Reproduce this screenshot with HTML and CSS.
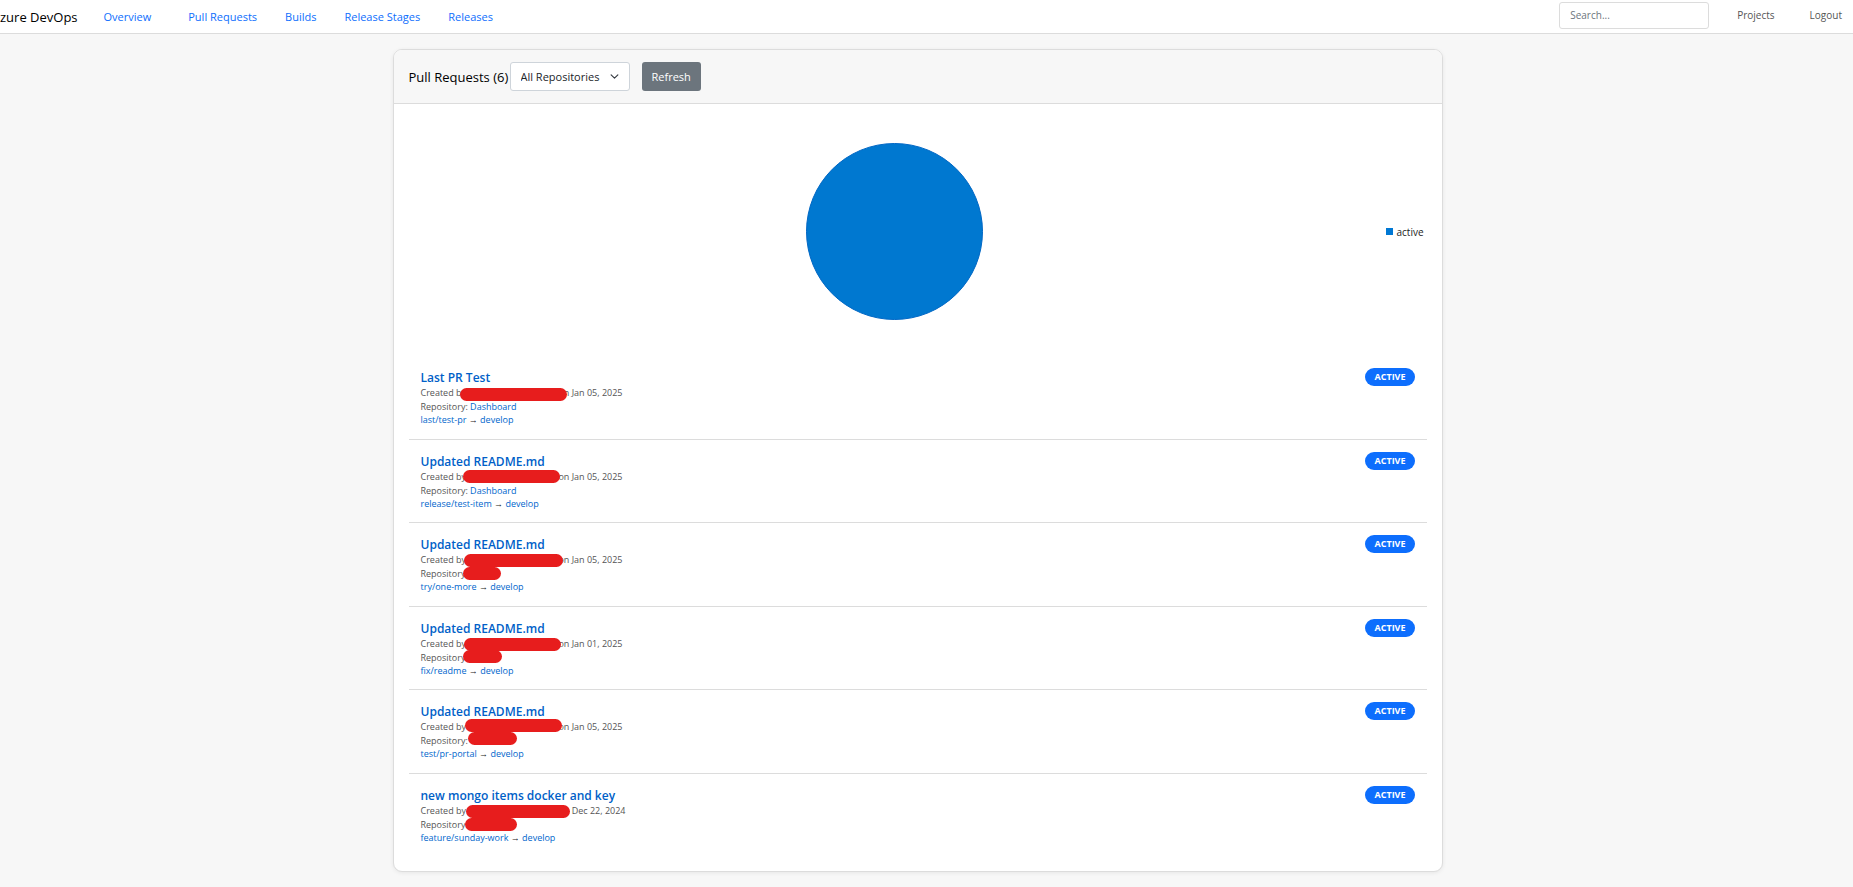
FILE: index.html
```
<!DOCTYPE html>
<html lang="en">
<head>
<meta charset="utf-8">
<title>Azure DevOps - Pull Requests</title>
<link rel="stylesheet" href="styles.css">
</head>
<body>
<header class="navbar">
  <div class="brand">zure DevOps</div>
  <nav class="nav-links">
    <a class="first" href="#overview">Overview</a>
    <a href="#pull-requests">Pull Requests</a>
    <a href="#builds">Builds</a>
    <a href="#stages">Release Stages</a>
    <a href="#releases">Releases</a>
  </nav>
  <div class="nav-right">
    <input class="search" type="search" placeholder="Search..." aria-label="Search">
    <a href="#projects">Projects</a>
    <a href="#logout">Logout</a>
  </div>
</header>
<main class="card">
  <div class="card-header">
    <h1>Pull Requests (6)</h1>
    <div class="select-wrap">
      <select aria-label="Repository"><option>All Repositories</option></select>
      <svg class="chevron" viewBox="0 0 16 16" aria-hidden="true"><path d="m2 5 6 6 6-6"/></svg>
    </div>
    <button class="refresh" type="button">Refresh</button>
  </div>
  <div class="card-body">
    <div class="chart">
      <div class="pie-area"><svg class="pie" viewBox="0 0 177 177" role="img" aria-label="active: 6"><circle cx="88.5" cy="88.5" r="88"/></svg></div>
      <div class="legend"><span class="swatch"></span>active</div>
    </div>
    <ul class="pr-list">
      <li class="pr">
        <div class="info">
          <a class="title" href="#pr6">Last PR Test</a>
          <p class="created"><span>Created by</span><span>on Jan 05, 2025</span></p>
          <p>Repository: <a href="#repo">Dashboard</a></p>
          <p class="branch"><a href="#b">last/test-pr</a> → <a href="#d">develop</a></p>
          <i class="mask author-a"></i>
        </div>
        <span class="badge">ACTIVE</span>
      </li>
      <li class="pr">
        <div class="info">
          <a class="title" href="#pr5">Updated README.md</a>
          <p class="created"><span>Created by</span><span>on Jan 05, 2025</span></p>
          <p>Repository: <a href="#repo">Dashboard</a></p>
          <p class="branch"><a href="#b">release/test-item</a> → <a href="#d">develop</a></p>
          <i class="mask author-b"></i>
        </div>
        <span class="badge">ACTIVE</span>
      </li>
      <li class="pr">
        <div class="info">
          <a class="title" href="#pr4">Updated README.md</a>
          <p class="created"><span>Created by</span><span>on Jan 05, 2025</span></p>
          <p>Repository:</p>
          <p class="branch"><a href="#b">try/one-more</a> → <a href="#d">develop</a></p>
          <i class="mask author-c"></i><i class="mask repo-c"></i>
        </div>
        <span class="badge">ACTIVE</span>
      </li>
      <li class="pr">
        <div class="info">
          <a class="title" href="#pr3">Updated README.md</a>
          <p class="created"><span>Created by</span><span>on Jan 01, 2025</span></p>
          <p>Repository:</p>
          <p class="branch"><a href="#b">fix/readme</a> → <a href="#d">develop</a></p>
          <i class="mask author-d"></i><i class="mask repo-d"></i>
        </div>
        <span class="badge">ACTIVE</span>
      </li>
      <li class="pr">
        <div class="info">
          <a class="title" href="#pr2">Updated README.md</a>
          <p class="created"><span>Created by</span><span>on Jan 05, 2025</span></p>
          <p>Repository:</p>
          <p class="branch"><a href="#b">test/pr-portal</a> → <a href="#d">develop</a></p>
          <i class="mask author-e"></i><i class="mask repo-e"></i>
        </div>
        <span class="badge">ACTIVE</span>
      </li>
      <li class="pr">
        <div class="info">
          <a class="title" href="#pr1">new mongo items docker and key</a>
          <p class="created wide"><span>Created by</span><span>on Dec 22, 2024</span></p>
          <p>Repository:</p>
          <p class="branch"><a href="#b">feature/sunday-work</a> → <a href="#d">develop</a></p>
          <i class="mask author-f"></i><i class="mask repo-f"></i>
        </div>
        <span class="badge">ACTIVE</span>
      </li>
    </ul>
  </div>
</main>
</body>
</html>
```
FILE: styles.css
```
* { box-sizing: border-box; }
body { margin: 0; background: #f7f7f7; color: #000; font-family: "Open Sans", "Noto Sans", sans-serif; font-size: 12px; line-height: 18px; }
a { color: #0066cc; text-decoration: none; }
p, h1, ul { margin: 0; padding: 0; }

.navbar { display: flex; align-items: center; height: 34px; background: #fff; border-bottom: 1px solid #dcdcdc; white-space: nowrap; }
.brand { font-size: 13px; font-weight: 500; min-width: 77px; }
.nav-links { display: flex; gap: 28px; margin-left: 26px; }
.nav-links a { color: #0d6efd; font-size: 11px; }
.nav-links .first { margin-right: 9px; }
.nav-right { display: flex; align-items: center; margin-left: auto; padding: 0 11px 3px 0; }
.nav-right a { color: #555; font-size: 10px; margin-left: 35px; }
.nav-right .search + a { margin-left: 28px; }
.search { width: 150px; height: 27px; padding: 0 10px; border: 1px solid #dcdcdc; border-radius: 3px; background: #fff; font: 10px "Open Sans", "Noto Sans", sans-serif; outline: none; appearance: none; }
.search::placeholder { color: #6c757d; opacity: 1; }

.card { width: calc(100% - 32px); max-width: 1050px; margin: 15px auto; position: relative; right: 9px; background: #fff; border: 1px solid #dcdcdc; border-radius: 9px; box-shadow: 0 1px 4px rgba(0, 0, 0, .07); }
.card-header { display: flex; align-items: center; padding: 12px 15px; background: #f7f7f7; border-bottom: 1px solid #dcdcdc; border-radius: 8px 8px 0 0; }
.card-header h1 { min-width: 101px; font-size: 13px; font-weight: 500; white-space: nowrap; }
.select-wrap { position: relative; }
select { display: block; appearance: none; width: 120px; height: 29px; padding: 0 24px 0 10px; border: 1px solid #ced4da; border-radius: 3px; background: #fff; color: #212529; font: 11px "Open Sans", "Noto Sans", sans-serif; }
.chevron { position: absolute; right: 11px; top: 10px; width: 9px; height: 9px; fill: none; stroke: #343a40; stroke-width: 2; stroke-linecap: round; stroke-linejoin: round; pointer-events: none; }
.refresh { height: 29px; margin-left: 12px; padding: 0 10px; border: 0; border-radius: 3px; background: #6c757d; color: #fff; font: 11px "Open Sans", "Noto Sans", sans-serif; }

.card-body { padding: 15px; }
.chart { display: flex; align-items: center; height: 225px; margin-bottom: 12px; }
.pie-area { flex: 1; display: flex; justify-content: center; }
.pie { width: 177px; height: 177px; fill: #0078d0; stroke: #0067c5; stroke-width: 1; }
.legend { display: flex; align-items: center; gap: 4px; width: 41px; margin-left: 5px; font-size: 10px; color: #222; }
.swatch { width: 7px; height: 7px; background: #0078d4; }

.pr-list { list-style: none; }
.pr { display: flex; justify-content: space-between; align-items: flex-start; padding: 12px 12px 13px; border-bottom: 1px solid #dcdcdc; }
.pr:nth-child(even) { padding-bottom: 12px; }
.pr:last-child { border-bottom: 0; }
.info { position: relative; font-size: 9px; line-height: 14px; color: #555; white-space: nowrap; }
.title { display: block; padding-top: 1px; color: #005fc8; font-size: 12px; font-weight: 600; line-height: 17px; }
.created { display: flex; justify-content: space-between; width: 202px; }
.created.wide { width: 205px; }
.branch { color: #222; line-height: 12px; }
.badge { padding: 0 9px; border-radius: 9px; background: #0d6efd; color: #fff; font-size: 9px; font-weight: 700; line-height: 18px; }

/* Redaction marks over author and repository names */
.mask { position: absolute; height: 13px; border-radius: 7px; background: #e71d1d; }
.author-a { left: 39px; top: 20px; width: 107px; }
.author-b { left: 42px; top: 18px; width: 97px; }
.author-c { left: 43px; top: 19px; width: 99px; }
.author-d { left: 43px; top: 19px; width: 97px; }
.author-e { left: 44px; top: 17px; width: 97px; }
.author-f { left: 45px; top: 19px; width: 104px; }
.repo-c { left: 42px; top: 32px; width: 38px; }
.repo-d { left: 42px; top: 31px; width: 39px; }
.repo-e { left: 47px; top: 30px; width: 49px; }
.repo-f { left: 44px; top: 32px; width: 52px; }
```
